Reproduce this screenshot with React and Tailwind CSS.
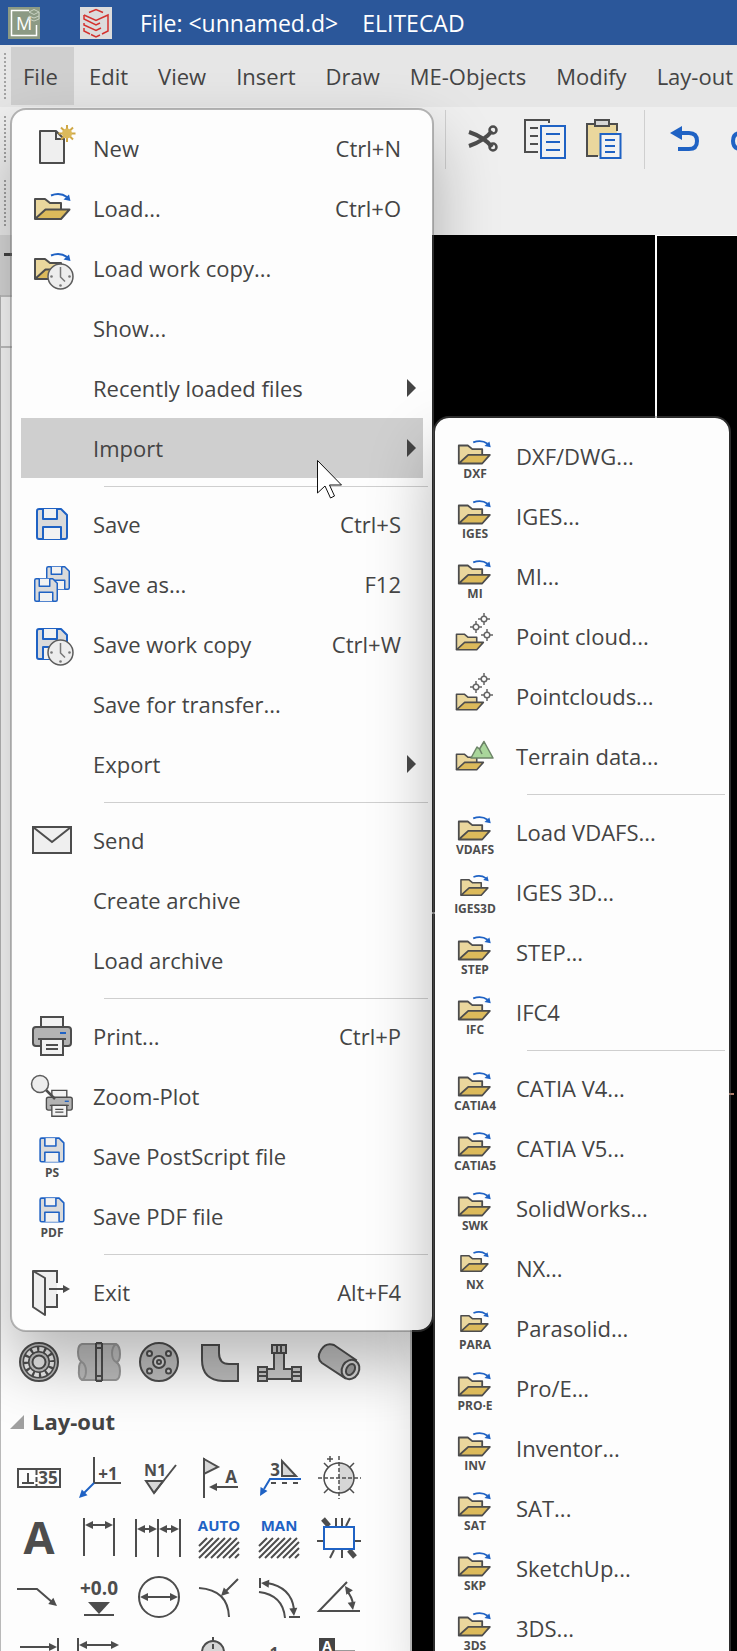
import { useState } from "react";

const DARK = "#4d4d4d";
const BLUE = "#1f62c4";

/* ---------- shared drawing parts ---------- */

function Icon({ children, className = "w-12 h-12" }) {
  return (
    <svg
      className={`${className} shrink-0 overflow-visible`}
      viewBox="0 0 48 48"
      fill="none"
      stroke={DARK}
      strokeWidth="2"
      aria-hidden="true"
    >
      {children}
    </svg>
  );
}

function Caption({ x = 24, y = 46, size = 12, fill = DARK, anchor = "middle", children }) {
  return (
    <text
      x={x}
      y={y}
      fontSize={size}
      fontWeight="700"
      fill={fill}
      stroke="none"
      textAnchor={anchor}
    >
      {children}
    </text>
  );
}

function FolderShape({ arrow = true }) {
  return (
    <g strokeLinejoin="round">
      <path d="M7 35V15H17L22 19H33V26" fill="#ead79d" />
      <path d="M7 35L17.500 25.500H41.500L33 35Z" fill="#dcba5b" />
      {arrow && (
        <g stroke={BLUE}>
          <path d="M23 11.500Q32 8 39 13" />
          <path d="M42.500 17L35.500 15.500L41 10.500Z" fill={BLUE} stroke="none" />
        </g>
      )}
    </g>
  );
}

function FloppyShape() {
  return (
    <g stroke={BLUE} strokeLinejoin="round">
      <path d="M11 9H33L39 15V37Q39 39 37 39H11Q9 39 9 37V11Q9 9 11 9Z" fill="#dadada" />
      <path d="M15 9V19H29V9" fill="#f2f2f2" />
      <path d="M15 39V27H33V39" fill="#f2f2f2" />
    </g>
  );
}

function ClockShape() {
  return (
    <g>
      <circle cx="32.500" cy="32.500" r="12.500" fill="#ededed" stroke="#5c5c5c" strokeWidth="1.500" />
      <path d="M32.500 23V33L37 37.500" stroke="#777" strokeWidth="1.500" />
      <g fill="#777" stroke="none">
        <circle cx="23.500" cy="32.500" r="1.300" />
        <circle cx="41.500" cy="32.500" r="1.300" />
        <circle cx="32.500" cy="41.500" r="1.300" />
      </g>
    </g>
  );
}

function PrinterShape() {
  return (
    <g>
      <path d="M13 15V5H35V15" fill="#f2f2f2" />
      <rect x="5" y="15" width="38" height="19" rx="3" fill="#b3b3b3" />
      <path d="M32 21H38" stroke={BLUE} />
      <path d="M13 27H35V43H13Z" fill="#f2f2f2" />
      <path d="M10 27H38M18 33H30M18 37H30" />
    </g>
  );
}

/* ---------- menu icons ---------- */

function NewIcon() {
  return (
    <Icon>
      <path d="M12 7H28L36 15V39H12Z" fill="#efefef" strokeLinejoin="round" />
      <path d="M28 7V15H36" />
      <path
        d="M39 1V18M30.500 9.500H47.500M33 3.500L45 15.500M45 3.500L33 15.500"
        stroke="#cfa745"
      />
      <circle cx="39" cy="9.500" r="5" fill="#dcba5b" stroke="none" />
    </Icon>
  );
}

const LoadIcon = () => <Icon><FolderShape /></Icon>;
const LoadCopyIcon = () => <Icon><FolderShape /><ClockShape /></Icon>;
const SaveIcon = () => <Icon><FloppyShape /></Icon>;
const SaveCopyIcon = () => <Icon><FloppyShape /><ClockShape /></Icon>;
const PrintIcon = () => <Icon><PrinterShape /></Icon>;

function SaveAsIcon() {
  return (
    <Icon>
      <g transform="translate(12 0) scale(.75)"><FloppyShape /></g>
      <g transform="translate(0 12) scale(.75)"><FloppyShape /></g>
    </Icon>
  );
}

function SendIcon() {
  return (
    <Icon>
      <rect x="5" y="11" width="38" height="26" fill="#efefef" />
      <path d="M5 11L24 26L43 11" />
    </Icon>
  );
}

function ZoomPlotIcon() {
  return (
    <Icon>
      <g transform="translate(15 15) scale(.68)"><PrinterShape /></g>
      <path d="M18 18L27 27" strokeWidth="2.500" />
      <circle cx="12" cy="12" r="8.500" fill="#ededed" stroke="#5c5c5c" strokeWidth="1.500" />
    </Icon>
  );
}

function SaveFormatIcon({ label }) {
  return (
    <Icon>
      <g transform="translate(5 -1) scale(.79)"><FloppyShape /></g>
      <Caption y={45}>{label}</Caption>
    </Icon>
  );
}

function ExitIcon() {
  return (
    <Icon>
      <path d="M5 3H29V39H17" fill="#efefef" stroke="none" />
      <path d="M5 3H29V15M29 26V39H17" />
      <path d="M5 3L17 10V47L5 39Z" fill="#efefef" strokeLinejoin="round" />
      <path d="M21 21H36" />
      <path d="M35 17L42 21L35 25Z" fill={DARK} stroke="none" />
    </Icon>
  );
}

function FormatIcon({ label, small }) {
  return (
    <Icon>
      <g transform={small ? "translate(4.5 0) scale(.78)" : "translate(1.5 0) scale(.9)"}>
        <FolderShape />
      </g>
      <Caption y={small ? 45 : 46}>{label}</Caption>
    </Icon>
  );
}

const CLOUD_POINTS = [[33, 7], [25, 15], [36, 23]];

function PointCloudIcon() {
  return (
    <Icon>
      <g transform="translate(0 10.5) scale(.78)"><FolderShape arrow={false} /></g>
      {CLOUD_POINTS.map(([x, y]) => (
        <g key={x} transform={`translate(${x} ${y})`} stroke="#666" strokeWidth="1.500">
          <circle r="2.800" fill="#fdfdfd" />
          <path d="M0 -6V-3M0 3V6M-6 0H-3M3 0H6" />
        </g>
      ))}
    </Icon>
  );
}

function TerrainIcon() {
  return (
    <Icon>
      <g transform="translate(0 10.5) scale(.78)"><FolderShape arrow={false} /></g>
      <path
        d="M20 26L26 15L28.500 17L33 9.500L42 26Z"
        fill="#a9d69b"
        stroke="#6c8467"
        strokeWidth="1.500"
        strokeLinejoin="round"
      />
      <path d="M28.500 17L31 22" stroke="#6c8467" strokeWidth="1.500" />
    </Icon>
  );
}

/* ---------- menu data ---------- */

const fileMenu = [
  { label: "New", keys: "Ctrl+N", icon: <NewIcon /> },
  { label: "Load...", keys: "Ctrl+O", icon: <LoadIcon /> },
  { label: "Load work copy...", icon: <LoadCopyIcon /> },
  { label: "Show..." },
  { label: "Recently loaded files", more: true },
  { label: "Import", more: true, submenu: "import" },
  null,
  { label: "Save", keys: "Ctrl+S", icon: <SaveIcon /> },
  { label: "Save as...", keys: "F12", icon: <SaveAsIcon /> },
  { label: "Save work copy", keys: "Ctrl+W", icon: <SaveCopyIcon /> },
  { label: "Save for transfer..." },
  { label: "Export", more: true },
  null,
  { label: "Send", icon: <SendIcon /> },
  { label: "Create archive" },
  { label: "Load archive" },
  null,
  { label: "Print...", keys: "Ctrl+P", icon: <PrintIcon /> },
  { label: "Zoom-Plot", icon: <ZoomPlotIcon /> },
  { label: "Save PostScript file", icon: <SaveFormatIcon label="PS" /> },
  { label: "Save PDF file", icon: <SaveFormatIcon label="PDF" /> },
  null,
  { label: "Exit", keys: "Alt+F4", icon: <ExitIcon /> },
];

const importMenu = [
  { label: "DXF/DWG...", icon: <FormatIcon label="DXF" /> },
  { label: "IGES...", icon: <FormatIcon label="IGES" /> },
  { label: "MI...", icon: <FormatIcon label="MI" /> },
  { label: "Point cloud...", icon: <PointCloudIcon /> },
  { label: "Pointclouds...", icon: <PointCloudIcon /> },
  { label: "Terrain data...", icon: <TerrainIcon /> },
  null,
  { label: "Load VDAFS...", icon: <FormatIcon label="VDAFS" /> },
  { label: "IGES 3D...", icon: <FormatIcon label="IGES3D" small /> },
  { label: "STEP...", icon: <FormatIcon label="STEP" /> },
  { label: "IFC4", icon: <FormatIcon label="IFC" /> },
  null,
  { label: "CATIA V4...", icon: <FormatIcon label="CATIA4" /> },
  { label: "CATIA V5...", icon: <FormatIcon label="CATIA5" /> },
  { label: "SolidWorks...", icon: <FormatIcon label="SWK" /> },
  { label: "NX...", icon: <FormatIcon label="NX" small /> },
  { label: "Parasolid...", icon: <FormatIcon label="PARA" small /> },
  { label: "Pro/E...", icon: <FormatIcon label="PRO·E" /> },
  { label: "Inventor...", icon: <FormatIcon label="INV" /> },
  { label: "SAT...", icon: <FormatIcon label="SAT" /> },
  { label: "SketchUp...", icon: <FormatIcon label="SKP" /> },
  { label: "3DS...", icon: <FormatIcon label="3DS" /> },
];

/* ---------- menus ---------- */

function Menu({ items, open, onOpen, className }) {
  return (
    <ul
      role="menu"
      className={`absolute rounded-2xl border-2 border-[#67676770] bg-[#fdfdfd] bg-clip-padding py-2 shadow-[0_32px_64px_rgba(0,0,0,0.28)] ${className}`}
    >
      {items.map((item, i) => {
        if (!item) {
          return (
            <li key={i} role="separator" className="h-4 pt-2 pl-[92px] pr-1">
              <div className="h-px bg-[#cfcfcf]"></div>
            </li>
          );
        }
        const active = item.submenu && item.submenu === open;
        return (
          <li key={i} role="none" className="relative px-[9px]">
            <button
              role="menuitem"
              onClick={() => item.submenu && onOpen(active ? "" : item.submenu)}
              className={`flex h-[60px] w-full items-center gap-4 pl-[7px] text-left ${item.more ? "pr-[7px]" : "pr-[22px]"} ${active ? "bg-[#cfcfcf]" : ""}`}
            >
              {item.icon || <span className="w-12 shrink-0"></span>}
              <span className="flex-1 whitespace-nowrap pl-px">{item.label}</span>
              {item.keys && <span>{item.keys}</span>}
              {item.more && (
                <svg className="h-[18px] w-[9px]" viewBox="0 0 9 18" aria-hidden="true">
                  <path d="M0 0L9 9L0 18Z" fill="#444" />
                </svg>
              )}
            </button>
            {active && <Menu items={importMenu} className="left-full -top-0.5 ml-px w-[298px]" />}
          </li>
        );
      })}
    </ul>
  );
}

/* ---------- tool palette ---------- */

const Head = ({ x, y, r = 0, color = DARK }) => (
  <path
    d="M0 0L-8 -4V4Z"
    transform={`translate(${x} ${y}) rotate(${r})`}
    fill={color}
    stroke="none"
  />
);

const Hatch = () => (
  <path
    strokeWidth="2"
    d="M4 33L12 25M4 39L18 25M4 45L24 25M10 45L30 25M16 45L36 25M22 45L42 25M28 45L44 29M34 45L44 35M40 45L44 41"
  />
);

const pipeTools = [
  {
    name: "Bearing",
    art: (
      <>
        <circle cx="24" cy="24" r="19" fill="#bdbdbd" />
        <circle cx="24" cy="24" r="13" stroke={DARK} strokeWidth="7" />
        <circle cx="24" cy="24" r="13" stroke="#ececec" strokeWidth="4" strokeDasharray="4.500 2.300" />
        <circle cx="24" cy="24" r="8" stroke="#c4c4c4" />
        <circle cx="24" cy="24" r="6.500" fill="#e6e6e6" />
      </>
    ),
  },
  {
    name: "Coupling",
    art: (
      <>
        <g stroke="#999" fill="#bdbdbd">
          <path d="M7 6H41Q45 8 45 16Q45 24 41 24Q45 26 45 33Q45 41 41 42H7Q3 40 4 31Q4 24 7 24Q3 22 3 14Q3 7 7 6Z" />
          <path d="M7 24Q11 27 11 33Q11 40 7 42M41 6Q37 9 37 15Q37 22 41 24" />
        </g>
        <path d="M21 5H27M21 43H27M21 5V43M27 5V43M21 10H27M21 38H27" />
      </>
    ),
  },
  {
    name: "Flange",
    art: (
      <>
        <circle cx="24" cy="24" r="19" fill="#bdbdbd" />
        <g fill="#d6d6d6">
          <circle cx="14.500" cy="15.500" r="2.500" />
          <circle cx="33.500" cy="15.500" r="2.500" />
          <circle cx="14.500" cy="33" r="2.500" />
          <circle cx="33.500" cy="33" r="2.500" />
          <circle cx="24" cy="24" r="6" />
          <circle cx="24" cy="24" r="2" />
        </g>
      </>
    ),
  },
  {
    name: "Elbow",
    art: <path d="M7 7H24V15Q24 26 34 26H43V43H28Q7 42 7 22Z" fill="#bdbdbd" />,
  },
  {
    name: "Tee",
    art: (
      <g fill="#c9c9c9">
        <path d="M19 15V31H12V41H37V31H29V15" />
        <path d="M17 7H31V15H17ZM3 29H12V43H3ZM37 29H46V43H37Z" />
        <path d="M22 7V15M26 7V15M3 34H12M3 38H12M37 34H46M37 38H46" />
      </g>
    ),
  },
  {
    name: "Tube",
    art: (
      <>
        <path d="M19 7L41 22L30 40L7 25Q1 20 6 12Q11 4 19 7Z" fill="#bdbdbd" />
        <ellipse cx="35.500" cy="31.500" rx="8.500" ry="10" transform="rotate(30 35.5 31.5)" fill="#d6d6d6" />
        <ellipse cx="35.500" cy="31.500" rx="4" ry="6" transform="rotate(30 35.5 31.5)" fill="#a0a0a0" />
      </>
    ),
  },
];

const layoutTools = [
  {
    name: "Tolerance",
    art: (
      <>
        <rect x="3" y="16" width="42" height="18" />
        <path d="M13 20V30M7 30H19" />
        <path d="M21.500 17V33" strokeDasharray="5 2" />
        <Caption x={33} y={31} size={17}>35</Caption>
      </>
    ),
  },
  {
    name: "Position number",
    art: (
      <>
        <path d="M19 4V30H46" />
        <path d="M19 30L8 41" stroke={BLUE} />
        <Head x={4} y={45} r={135} color={BLUE} />
        <Caption x={33} y={27} size={17}>+1</Caption>
      </>
    ),
  },
  {
    name: "Surface finish",
    art: (
      <>
        <path d="M11 28H28L19 40Z" fill="#d6d6d6" />
        <path d="M19 40L41 12" />
        <Caption x={20} y={23} size={16}>N1</Caption>
      </>
    ),
  },
  {
    name: "Datum flag",
    art: (
      <>
        <path d="M9 6L23 14L9 21Z" fill="#d6d6d6" />
        <path d="M9 5V45M43 34H20" />
        <Head x={14} y={34} r={180} />
        <Caption x={36} y={30} size={17}>A</Caption>
      </>
    ),
  },
  {
    name: "Weld symbol",
    art: (
      <>
        <path d="M27 8V23H41Z" fill="#d6d6d6" />
        <path d="M46 26H15L9 36" stroke={BLUE} />
        <Head x={5} y={43} r={120} color={BLUE} />
        <path d="M16 30H45" strokeDasharray="5 6" />
        <Caption x={20} y={23} size={17}>3</Caption>
      </>
    ),
  },
  {
    name: "Centre mark",
    art: (
      <g strokeWidth="1.500">
        <path d="M24 10A15 15 0 0 1 24 40Z" fill="#d6d6d6" stroke="none" />
        <circle cx="24" cy="25" r="15" />
        <path d="M3 25H46M24 3V46" strokeDasharray="4 2" />
        <path d="M9 10L13 14M39 10L35 14M9 40L13 36M39 40L35 36M12 6H18M15 3V9" />
      </g>
    ),
  },
  { name: "Text", art: <Caption y={41} size={45}>A</Caption> },
  {
    name: "Dimension",
    art: (
      <>
        <path d="M9 5V43M39 5V43M16 12H32" />
        <Head x={10} y={12} r={180} />
        <Head x={38} y={12} />
      </>
    ),
  },
  {
    name: "Chain dimension",
    art: (
      <>
        <path d="M1 6V44M23 6V44M45 6V44M6 16H18M28 16H40" />
        <Head x={2} y={16} r={180} />
        <Head x={22} y={16} />
        <Head x={24} y={16} r={180} />
        <Head x={44} y={16} />
      </>
    ),
  },
  {
    name: "Automatic hatch",
    art: <><Hatch /><Caption y={18} size={15} fill={BLUE}>AUTO</Caption></>,
  },
  {
    name: "Manual hatch",
    art: <><Hatch /><Caption y={18} size={15} fill={BLUE}>MAN</Caption></>,
  },
  {
    name: "Cut-out",
    art: (
      <>
        <path d="M21 5V13M27 5V13M35 5L31 13M2 28H9M39 28H46M19 37L15 45M27 37V45" />
        <path d="M8 6L14 13M34 37L40 44" strokeWidth="5" />
        <rect x="9" y="14" width="30" height="22" stroke={BLUE} fill="#fdfdfd" />
      </>
    ),
  },
  {
    name: "Leader",
    art: <><path d="M2 16H22L37 29" /><Head x={42} y={33} r={39} /></>,
  },
  {
    name: "Level",
    art: (
      <>
        <Caption y={22} size={19}>+0.0</Caption>
        <path d="M13 29H35L24 41Z" fill={DARK} stroke="none" />
        <path d="M9 42H39" />
      </>
    ),
  },
  {
    name: "Diameter",
    art: (
      <>
        <circle cx="24" cy="24" r="20" />
        <path d="M12 24H36" />
        <Head x={5} y={24} r={180} />
        <Head x={43} y={24} />
      </>
    ),
  },
  {
    name: "Radius",
    art: <><path d="M4 15Q33 17 34 44M43 6L31 18" /><Head x={26} y={23} r={135} /></>,
  },
  {
    name: "Arc length",
    art: (
      <>
        <path d="M5 5V15M4 19Q28 22 30 45M12 10Q36 14 39 36M34 44H45" />
        <Head x={6} y={10} r={185} />
        <Head x={39} y={43} r={85} />
      </>
    ),
  },
  {
    name: "Angle",
    art: (
      <>
        <path d="M45 38H4L32 9M32 18Q37 24 38 31" />
        <Head x={30} y={13} r={235} />
        <Head x={38} y={37} r={80} />
      </>
    ),
  },
  { name: "End stop", art: <><path d="M5 14H38M43 5V24" /><Head x={42} y={14} /></> },
  {
    name: "Base dimension",
    art: (
      <>
        <path d="M3 5V40M10 12H38" />
        <Head x={4} y={12} r={180} />
        <Head x={44} y={12} />
      </>
    ),
  },
  { name: "Blank", art: null },
  {
    name: "Detail",
    art: (
      <>
        <circle cx="18" cy="19" r="11" fill="#d6d6d6" />
        <path d="M18 4V34" strokeDasharray="5 2" />
      </>
    ),
  },
  { name: "Numbering", art: <Caption x={19} y={26} size={16}>1</Caption> },
  {
    name: "Table",
    art: (
      <>
        <rect x="4" y="5" width="16" height="17" fill="#444" stroke="none" />
        <Caption x={12} y={18} size={14} fill="#fff">A</Caption>
        <path d="M20 18H40" stroke="#999" />
      </>
    ),
  },
];

function ToolGrid({ tools }) {
  return (
    <div className="grid grid-cols-[repeat(6,60px)] pl-2">
      {tools.map((tool) => (
        <button key={tool.name} aria-label={tool.name} className="flex h-[60px] items-center justify-center">
          <Icon>{tool.art}</Icon>
        </button>
      ))}
    </div>
  );
}

/* ---------- bars ---------- */

function Grip() {
  return (
    <svg className="h-[46px] w-[2px] shrink-0" viewBox="0 0 2 46" aria-hidden="true">
      <path d="M1 0V46" stroke="#a3a3a3" strokeWidth="2" strokeDasharray="2 2" />
    </svg>
  );
}

function TitleBar() {
  return (
    <header className="flex h-[45px] shrink-0 items-center bg-[#2b579a] pl-2 text-[23px] text-white">
      <svg className="h-8 w-8" viewBox="0 0 32 32" fill="none" aria-hidden="true">
        <rect width="32" height="32" fill="#8c9a84" />
        <path d="M21 3.500H3.500V28.500H28.500V18" stroke="#fff" strokeWidth="1.500" />
        <text x="16" y="23" fontSize="18" fill="#fff" textAnchor="middle">M</text>
        <path d="M21 5L26 2.500L31 5V12L26 14L21 12V9L26 11L31 9M21 5L26 7.500L31 5" stroke="#c9d2c3" />
      </svg>
      <svg className="ml-10 h-8 w-8" viewBox="0 0 32 32" fill="none" stroke="#d3322f" strokeWidth="1.500" aria-hidden="true">
        <rect width="32" height="32" fill="#dcdcdc" stroke="none" />
        <path d="M9 5.500L16 2.500L23 5.500" />
        <path d="M4 8V12L16 18L20 16" />
        <path d="M4 8L16 13.500L28 8V24L22 27" />
        <path d="M4 16V18L16 23.500L21 21" />
        <path d="M4 21V24L10 27M11 27.500L16 30L20 28" />
      </svg>
      <h1 className="ml-7 whitespace-pre pt-0.5">File: &lt;unnamed.d&gt;</h1>
      <span className="ml-6 pt-0.5">ELITECAD</span>
    </header>
  );
}

function ToolBar() {
  return (
    <div className="flex h-16 items-center pl-1">
      <Grip />
      <div className="ml-[439px] flex items-center">
        <div className="h-[59px] w-px bg-[#cfcfcf]"></div>
        <button aria-label="Cut" className="ml-[14px]">
          <Icon>
            <path d="M9 17Q24 22 32 32M9 31Q24 26 32 16" strokeWidth="4" />
            <circle cx="33" cy="15" r="3.500" strokeWidth="2.500" />
            <circle cx="33" cy="32" r="3.500" strokeWidth="2.500" />
          </Icon>
        </button>
        <button aria-label="Copy" className="ml-3">
          <Icon>
            <path d="M18 37H5V5H29V8M10 13H18M10 21H18M10 29H18" />
            <rect x="21" y="11" width="24" height="32" fill="#f2f2f2" stroke={BLUE} />
            <path d="M26 19H40M26 27H40M26 35H40" stroke={BLUE} />
          </Icon>
        </button>
        <button aria-label="Paste" className="ml-3">
          <Icon>
            <path d="M7 9H37V20H20V41H7Z" fill="#ead79d" stroke="none" />
            <path d="M18 41H7V9H37V16" />
            <rect x="15" y="5" width="14" height="6" fill="#d6d6d6" />
            <rect x="20.500" y="19" width="20" height="24" fill="#f2f2f2" stroke={BLUE} />
            <path d="M25 25H35M25 31H35M25 37H35" stroke={BLUE} />
          </Icon>
        </button>
        <div className="ml-4 h-[59px] w-px bg-[#cfcfcf]"></div>
        <button aria-label="Undo" className="ml-4">
          <Icon>
            <path d="M18 18H28Q36 18 36 26Q36 34 28 34H17" stroke={BLUE} strokeWidth="4" />
            <path d="M9 18L21 11V25Z" fill={BLUE} stroke="none" />
          </Icon>
        </button>
        <button aria-label="Redo" className="ml-3">
          <Icon>
            <path d="M30 18H20Q12 18 12 26Q12 34 20 34H31" stroke={BLUE} strokeWidth="4" />
            <path d="M39 18L27 11V25Z" fill={BLUE} stroke="none" />
          </Icon>
        </button>
      </div>
    </div>
  );
}

const menuNames = ["Edit", "View", "Insert", "Draw", "ME-Objects", "Modify", "Lay-out"];

function MenuBar() {
  const [fileOpen, setFileOpen] = useState(true);
  const [submenu, setSubmenu] = useState("import");

  return (
    <nav className="flex h-[62px] shrink-0 items-center bg-[#e6e6e6] pl-1">
      <Grip />
      <div className="relative z-10 ml-[5px]">
        <button
          onClick={() => setFileOpen(!fileOpen)}
          className="h-[58px] w-[63px] bg-[#cfcfcf] pl-3 text-left"
        >
          File
        </button>
        {fileOpen && (
          <Menu
            items={fileMenu}
            open={submenu}
            onOpen={setSubmenu}
            className="-left-px top-[61px] w-[424px]"
          />
        )}
      </div>
      {menuNames.map((name) => (
        <button key={name} className="h-[58px] whitespace-nowrap px-[15px]">
          {name}
        </button>
      ))}
    </nav>
  );
}

function Pointer() {
  return (
    <svg
      className="pointer-events-none absolute left-[317px] top-[460px] z-20 h-[39px] w-[26px]"
      viewBox="0 0 26 39"
      aria-hidden="true"
    >
      <path
        d="M.5 .5V33L8 26L13.500 38L17.500 36L12.500 25H24.500Z"
        fill="#fff"
        stroke="#111"
      />
    </svg>
  );
}

export default function App() {
  return (
    <div className="relative flex h-screen flex-col overflow-hidden bg-[#efefef] font-['Open_Sans','Noto_Sans',sans-serif] text-[22px] text-[#444]">
      <TitleBar />
      <MenuBar />
      <div className="shrink-0">
        <ToolBar />
        <div className="flex h-16 items-center pl-1">
          <Grip />
        </div>
      </div>

      <main className="flex min-h-0 flex-1">
        <aside className="flex w-[412px] shrink-0 flex-col border-r-2 border-[#bdbdbd] bg-[#fdfdfd]">
          <div className="h-[60px] shrink-0 bg-[#dadada] pl-1 pt-[18px]">
            <div className="h-[3px] w-3 bg-[#444]"></div>
          </div>
          <div className="flex-1 border-l border-[#b9b9b9]">
            <div className="h-[53px] border-y-2 border-[#c4c4c4]"></div>
            <div className="h-[984px]"></div>
            <ToolGrid tools={pipeTools} />
            <h2 className="flex h-[55px] items-center gap-2 pl-[9px] pt-1 font-bold">
              <svg className="h-[14px] w-[14px]" viewBox="0 0 14 14" aria-hidden="true">
                <path d="M14 0V14H0Z" fill="#a0a0a0" />
              </svg>
              Lay-out
            </h2>
            <ToolGrid tools={layoutTools} />
          </div>
        </aside>

        {/* drawing area */}
        <section className="flex flex-1 bg-black">
          <div className="w-[245px] shrink-0 border-r-2 border-white pt-[677px]">
            <div className="h-[2px] w-10 bg-[#ccc]"></div>
          </div>
          <div className="flex-1 border-t border-white pr-[3px] pt-[857px]">
            <div className="h-[2px] bg-[#c98f78]"></div>
          </div>
        </section>
      </main>

      <Pointer />
    </div>
  );
}
